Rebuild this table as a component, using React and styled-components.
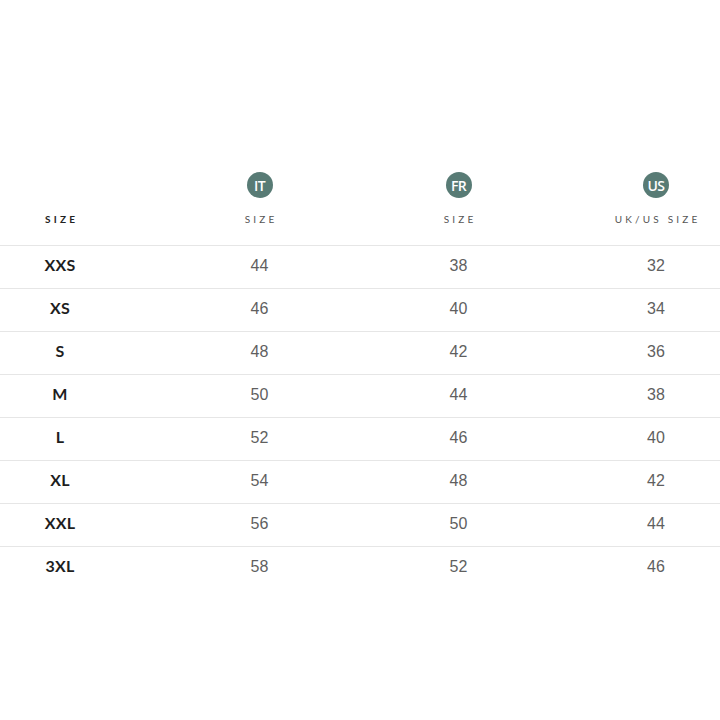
import React from "react";
import styled, { createGlobalStyle } from "styled-components";

const GlobalStyle = createGlobalStyle`
  html, body {
    margin: 0;
    padding: 0;
    background: #fff;
  }
  body {
    font-family: Lato, "Open Sans", sans-serif;
    color: #222;
  }
`;

const Page = styled.div`
  width: 720px;
  height: 720px;
  padding-top: 172px;
  box-sizing: border-box;
  overflow: hidden;
`;

const Row = styled.div`
  display: grid;
  grid-template-columns: 160px 199px 199px 1fr;
  align-items: ${(p) => (p.$head ? "end" : "center")};
  height: ${(p) => (p.$head ? "auto" : "40px")};
  padding-bottom: ${(p) => (p.$head ? "19px" : "2px")};
  box-sizing: content-box;
  border-bottom: ${(p) => (p.$last ? "none" : "1px solid #e6e6e6")};
`;

const Cell = styled.div`
  display: flex;
  flex-direction: column;
  align-items: center;
  padding-right: ${(p) => p.$right || 0}px;
  padding-left: ${(p) => p.$left || 0}px;
`;

const Badge = styled.div`
  width: 26px;
  height: 26px;
  border-radius: 50%;
  background: #587b75;
  color: #fff;
  font-family: "Open Sans", sans-serif;
  font-weight: 600;
  font-size: 14px;
  letter-spacing: -0.6px;
  display: flex;
  align-items: center;
  justify-content: center;
  margin-bottom: 14px;
`;

const HeadLabel = styled.div`
  font-family: Lato, sans-serif;
  font-size: 10px;
  line-height: 14px;
  letter-spacing: 3.2px;
  margin-right: -3.2px;
  font-weight: ${(p) => (p.$main ? 700 : 400)};
  color: ${(p) => (p.$main ? "#222" : "#555")};
  text-transform: uppercase;
`;

const SizeName = styled.div`
  font-family: Lato, sans-serif;
  font-weight: 700;
  font-size: 16px;
  line-height: 20px;
  margin-bottom: 3px;
  color: #1e1e1e;
  letter-spacing: 0.3px;
`;

const Value = styled.div`
  font-family: "Liberation Sans", Arial, sans-serif;
  font-size: 16px;
  line-height: 20px;
  color: #5f5f5f;
`;

const sizes = [
  ["XXS", 44, 38, 32],
  ["XS", 46, 40, 34],
  ["S", 48, 42, 36],
  ["M", 50, 44, 38],
  ["L", 52, 46, 40],
  ["XL", 54, 48, 42],
  ["XXL", 56, 50, 44],
  ["3XL", 58, 52, 46],
];

const App = () => {
  return (
    <>
      <GlobalStyle />
      <Page>
        <Row $head>
          <Cell $right={40}>
            <HeadLabel $main>Size</HeadLabel>
          </Cell>
          <Cell>
            <Badge>IT</Badge>
            <HeadLabel>Size</HeadLabel>
          </Cell>
          <Cell>
            <Badge>FR</Badge>
            <HeadLabel>Size</HeadLabel>
          </Cell>
          <Cell $left={34}>
            <Badge>US</Badge>
            <HeadLabel>UK/US Size</HeadLabel>
          </Cell>
        </Row>
        {sizes.map(([name, it, fr, us], i) => (
          <Row key={name} $last={i === sizes.length - 1}>
            <Cell $right={40}>
              <SizeName>{name}</SizeName>
            </Cell>
            <Cell>
              <Value>{it}</Value>
            </Cell>
            <Cell>
              <Value>{fr}</Value>
            </Cell>
            <Cell $left={34}>
              <Value>{us}</Value>
            </Cell>
          </Row>
        ))}
      </Page>
    </>
  );
};

export default App;
